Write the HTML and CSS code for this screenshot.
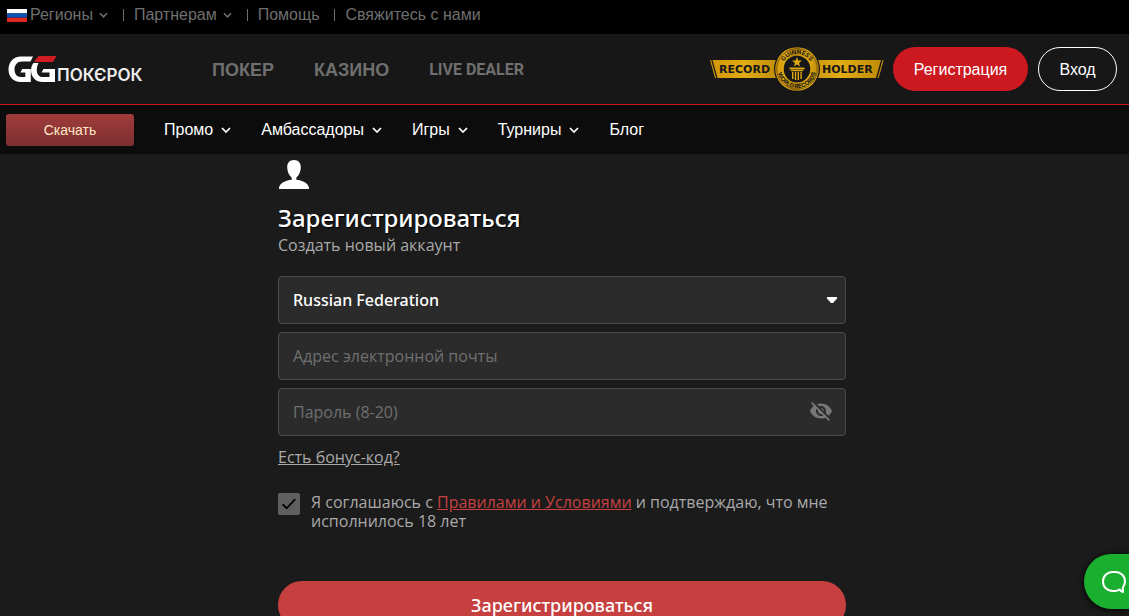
FILE: index.html
```html
<!DOCTYPE html>
<html lang="ru">
<head>
<meta charset="utf-8">
<meta name="viewport" content="width=device-width, initial-scale=1">
<title>GGПокерок — Регистрация</title>
<link rel="stylesheet" href="styles.css">
</head>
<body>
<svg class="defs" aria-hidden="true">
  <symbol id="chevron" viewBox="0 0 10 6"><path d="M1 1l4 4 4-4" fill="none" stroke="currentColor" stroke-width="1.7"/></symbol>
</svg>
<nav class="topbar" aria-label="Служебное меню">
  <a class="topbar-item" href="#">
    <svg class="flag" viewBox="0 0 20 13"><path fill="#fff" d="M0 0h20v4.400H0z"/><path fill="#0b52b5" d="M0 4.300h20v4.400H0z"/><path fill="#e0281f" d="M0 8.700h20V13H0z"/></svg>
    <span>Регионы</span><svg class="chevron"><use href="#chevron"/></svg>
  </a>
  <a class="topbar-item" href="#"><span>Партнерам</span><svg class="chevron"><use href="#chevron"/></svg></a>
  <a class="topbar-item" href="#">Помощь</a>
  <a class="topbar-item" href="#">Свяжитесь с нами</a>
</nav>
<header class="header">
  <a class="logo" href="#" aria-label="GGПокерок">
    <svg width="136" height="30" viewBox="0 0 136 30">
      <g fill="#fff">
        <path d="M25 2.500H13C5 2.500.5 8.500.5 15.500c0 7.500 5 12.500 12 12.500h10.300V15h-8.500l-2 3.500h5V23h-4.500C9 23 6.500 20 6.500 15.500c0-4.700 3-8 7.500-8h8.500z"/>
        <path d="M30.500 9h-5c-1.500 2-2.500 4.300-2.500 7.200C23 23.200 28 28 34.500 28H47V15H35.500l-2 3.500h8V23h-6.200c-4 0-6.500-2.600-6.500-6.600 0-3 .7-5.400 1.700-7.400z"/>
      </g>
      <path fill="#d01c22" d="M30.500 2H48.500L45 8H26z"/>
      <text class="logo-text" x="49" y="27">ПОКЄРОК</text>
    </svg>
  </a>
  <nav class="sections" aria-label="Разделы">
    <a href="#">ПОКЕР</a>
    <a href="#">КАЗИНО</a>
    <a class="live" href="#">LIVE DEALER</a>
  </nav>
  <svg class="record" viewBox="0 0 174 46" role="img" aria-label="Guinness World Records Record Holder">
    <defs>
      <linearGradient id="gold" x1="0" x2="1"><stop offset="0" stop-color="#cf9408"/><stop offset=".2" stop-color="#e2ac14"/><stop offset=".45" stop-color="#b58206"/><stop offset=".75" stop-color="#e2ac14"/><stop offset="1" stop-color="#bd8906"/></linearGradient>
      <path id="arc-top" d="M72 23a15 15 0 0 1 30 0"/>
      <path id="arc-bottom" d="M70.200 13.500a19.300 19.300 0 1 0 33.600 0"/>
    </defs>
    <path fill="url(#gold)" d="M2.500 14H171l-5 18H7.500zM0 14h1.200l5 18H5zM172.500 14h1.200l-5 18h-1.200z"/>
    <text class="record-text" x="9" y="27">RECORD</text>
    <text class="record-text" x="112" y="27">HOLDER</text>
    <circle cx="87" cy="23" r="23" fill="#171717"/>
    <circle cx="87" cy="23" r="21.800" fill="url(#gold)"/>
    <circle cx="87" cy="23" r="20.300" fill="none" stroke="#5a430a" stroke-width=".7"/>
    <circle cx="87" cy="23" r="13.300" fill="#171717"/>
    <text class="seal-text" text-anchor="middle"><textPath href="#arc-top" startOffset="50%">GUINNESS</textPath></text>
    <text class="seal-text" text-anchor="middle"><textPath href="#arc-bottom" startOffset="50%">WORLD RECORDS</textPath></text>
    <path fill="#dca612" d="M87 11l1.300 3.400 3.700.2-2.900 2.300 1 3.600-3.100-2-3.100 2 1-3.600-2.900-2.300 3.700-.2zM79.500 21.500h15v2h-15zM81 24h12v1.200H81zM82 26h1.400v7H82zM84.800 26h1.400v8h-1.400zM87.600 26h1.400v8h-1.400zM90.400 26h1.400v7h-1.400z"/>
  </svg>
  <button class="pill pill-solid" type="button">Регистрация</button>
  <button class="pill pill-outline" type="button">Вход</button>
</header>
<nav class="menu" aria-label="Главное меню">
  <button class="download" type="button">Скачать</button>
  <a class="menu-item" href="#">Промо<svg class="chevron"><use href="#chevron"/></svg></a>
  <a class="menu-item" href="#">Амбассадоры<svg class="chevron"><use href="#chevron"/></svg></a>
  <a class="menu-item" href="#">Игры<svg class="chevron"><use href="#chevron"/></svg></a>
  <a class="menu-item" href="#">Турниры<svg class="chevron"><use href="#chevron"/></svg></a>
  <a class="menu-item" href="#">Блог</a>
</nav>
<main class="main">
  <form class="form">
    <svg class="user" viewBox="0 0 32 30"><path fill="#fff" d="M16 0c-4.300 0-6.800 2.800-6.800 7 0 4 1.500 8.300 4.500 10.700v2C8 20.500 2.300 22 1 27.800V29h30v-1.200c-1.300-5.800-7-7.300-12.700-8.100v-2c3-2.400 4.500-6.700 4.500-10.700 0-4.200-2.500-7-6.800-7z"/></svg>
    <h1 class="title">Зарегистрироваться</h1>
    <p class="subtitle">Создать новый аккаунт</p>
    <div class="fields">
      <div class="field">
        <select class="control control-select" aria-label="Страна"><option>Russian Federation</option></select>
        <svg class="caret" viewBox="0 0 12 8"><path fill="#fff" d="M1 1h10v1.500L7 7H5L1 2.500z"/></svg>
      </div>
      <div class="field"><input class="control" type="email" placeholder="Адрес электронной почты" aria-label="Адрес электронной почты"></div>
      <div class="field">
        <input class="control" type="password" placeholder="Пароль (8-20)" aria-label="Пароль (8-20)">
        <button class="reveal" type="button" aria-label="Показать пароль">
          <svg width="24" height="24" viewBox="0 0 24 24"><path fill="#777" d="M12 7c2.760 0 5 2.240 5 5 0 .65-.13 1.260-.36 1.830l2.920 2.920c1.510-1.260 2.700-2.890 3.430-4.750-1.730-4.390-6-7.500-11-7.500-1.400 0-2.740.25-3.980.7l2.160 2.160C10.740 7.130 11.350 7 12 7zM2 4.270l2.280 2.280.46.460C3.080 8.300 1.780 10.020 1 12c1.730 4.390 6 7.500 11 7.500 1.550 0 3.030-.3 4.380-.84l.42.420L19.730 22 21 20.730 3.270 3 2 4.270zM7.530 9.800l1.550 1.550c-.05.210-.08.430-.08.650 0 1.660 1.340 3 3 3 .22 0 .44-.03.650-.08l1.550 1.550c-.67.330-1.410.53-2.200.53-2.760 0-5-2.240-5-5 0-.79.200-1.530.53-2.200zm4.310-.78l3.150 3.150.02-.16c0-1.660-1.340-3-3-3l-.17.010z"/></svg>
        </button>
      </div>
    </div>
    <a class="bonus" href="#">Есть бонус-код?</a>
    <div class="agree">
      <input class="check" type="checkbox" id="agree" checked>
      <label for="agree">Я соглашаюсь с <a class="terms" href="#">Правилами и Условиями</a> и подтверждаю, что мне исполнилось 18 лет</label>
    </div>
    <button class="submit" type="submit">Зарегистрироваться</button>
  </form>
</main>
<button class="chat" type="button" aria-label="Чат">
  <svg width="26" height="24" viewBox="0 0 26 24"><path fill="none" stroke="#fff" stroke-width="2" stroke-linejoin="round" d="M18.500 19.500c-1.300.9-3 1.500-4.500 1.500h-2C6 21 2 17 2 11.500S6 2 12 2h2c6 0 10 4 10 9.500 0 2.200-.8 4.200-2.200 6 .2 1.500.2 3 .2 4.500-1.300-.5-2.500-1.300-3.500-2.500z"/></svg>
</button>
</body>
</html>
```
FILE: styles.css
```css
* { box-sizing: border-box; }
body {
  margin: 0;
  height: 100vh;
  overflow: hidden;
  background: #1b1b1b;
  color: #fff;
  font: 16px/20px "Liberation Sans", Arial, sans-serif;
}
a { color: inherit; text-decoration: none; }
button { font: inherit; color: inherit; border: 0; cursor: pointer; }
svg { display: block; flex: none; }
.defs { position: absolute; width: 0; height: 0; }
.chevron { width: 10px; height: 6px; }

.topbar {
  display: flex;
  align-items: center;
  height: 34px;
  padding: 0 7px 4px;
  background: #000;
  color: #6f6f6f;
}
.topbar-item { display: flex; align-items: center; }
.topbar-item + .topbar-item::before {
  content: "";
  width: 1px;
  height: 12px;
  margin: 0 10px 0 15px;
  background: #6f6f6f;
}
.topbar .chevron { width: 9px; margin-left: 6px; }
.flag { width: 20px; height: 13px; margin-right: 3px; }

.header {
  display: flex;
  align-items: center;
  height: 71px;
  padding: 0 12px 0 8px;
  background: #171717;
  border-bottom: 1px solid #cc1920;
}
.logo { margin-right: 68px; }
.logo-text { font: 600 17px Inter, sans-serif; fill: #eee; }
.sections {
  display: flex;
  gap: 40px;
  margin-right: auto;
  padding-top: 2px;
  color: #6f6f6f;
  font-size: 18px;
  font-weight: bold;
}
.live { font: bold 16px/20px Roboto, sans-serif; }
.record { width: 174px; height: 46px; margin-right: 9px; }
.record-text { font: bold 11px "DejaVu Sans", sans-serif; fill: #171717; }
.seal-text { font: 700 6px Inter, sans-serif; fill: #171717; }
.pill { height: 44px; padding: 2px 20px 0; border-radius: 22px; }
.pill-solid { min-width: 135px; background: #cc1920; }
.pill-outline { min-width: 79px; margin-left: 10px; border: 1px solid #fff; background: none; }

.menu {
  display: flex;
  align-items: center;
  gap: 30px;
  height: 49px;
  padding: 0 6px;
  background: #0c0c0c;
}
.menu-item { display: flex; align-items: center; gap: 8px; }
.download {
  width: 128px;
  height: 32px;
  border-radius: 3px;
  background: linear-gradient(#a03c3c, #7d2e30);
  color: #ffe9c4;
  font-size: 14px;
}

.main {
  padding: 6px 21px 0 16px;
  font-family: "Open Sans", "Noto Sans", sans-serif;
  color: #a9a9a9;
}
.form { max-width: 568px; margin: 0 auto; }
.user { width: 32px; height: 30px; }
.title {
  margin: 12px 0 0;
  color: #fff;
  font-family: "Noto Sans", sans-serif;
  font-size: 24px;
  font-weight: 500;
  line-height: 32px;
  text-shadow: 1px 1px 1px #000;
}
.subtitle { margin: 0 0 20px; line-height: 22px; }
.fields { display: grid; gap: 8px; }
.field { position: relative; }
.control {
  display: block;
  width: 100%;
  height: 48px;
  padding: 0 14px;
  border: 1px solid #4b4b4b;
  border-radius: 4px;
  background: #2b2b2b;
  color: #fff;
  font: 16px "Open Sans", "Noto Sans", sans-serif;
}
.control::placeholder { color: #707070; }
.control-select { appearance: none; padding-right: 40px; font-family: "Noto Sans", sans-serif; font-weight: 500; }
.caret { position: absolute; right: 8px; top: 20px; width: 12px; height: 8px; pointer-events: none; }
.reveal { position: absolute; right: 13px; top: 11px; padding: 0; background: none; }
.bonus { display: inline-block; margin: 11px 0 25px; text-decoration: underline; }
.agree { display: flex; gap: 11px; margin-bottom: 50px; line-height: 19px; }
.agree label { padding-top: 1px; }
.check {
  appearance: none;
  flex: none;
  width: 22px;
  height: 22px;
  margin: 1px 0 0;
  border-radius: 2px;
  background: #5f5f5f;
  display: grid;
  place-items: center;
}
.check:checked::before {
  content: "";
  width: 14px;
  height: 11px;
  background: #000;
  clip-path: polygon(0 58%, 9% 46%, 34% 78%, 90% 0, 100% 10%, 34% 100%);
}
.terms { color: #c64040; text-decoration: underline; }
.submit {
  width: 100%;
  height: 48px;
  border-radius: 24px;
  background: #c64040;
  font: 500 18px "Noto Sans", sans-serif;
  color: #fff;
}
.chat {
  position: fixed;
  right: 0;
  bottom: 7px;
  display: flex;
  align-items: center;
  height: 55px;
  padding: 0 2px 0 17px;
  border-radius: 28px 0 0 28px;
  background: #1aaf2f;
  box-shadow: 0 1px 6px #000;
}
```
